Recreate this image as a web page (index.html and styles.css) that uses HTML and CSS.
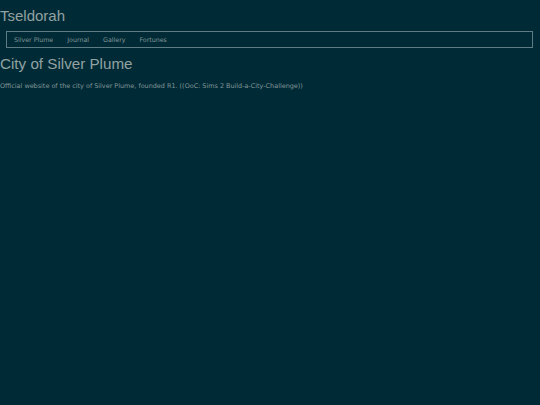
FILE: index.html
```html
<!DOCTYPE html>
<html>
<head>
  <title>Tseldorah</title>
  <link rel="stylesheet" href="styles.css">
</head>
<body>

  <div class="site-title">Tseldorah</div>

  <div class="nav">
    <a href="#">Silver Plume</a>
    <a href="#">Journal</a>
    <a href="#">Gallery</a>
    <a href="#">Fortunes</a>
  </div>

  <h1>City of Silver Plume</h1>
  <p class="intro">Official website of the city of Silver Plume, founded R1. ((OoC: Sims 2 Build-a-City-Challenge))</p>

</body>
</html>
```

FILE: styles.css
```css
body {
  background-color: #002b36;
  color: #839496;
  font-family: 'DejaVu Sans', Verdana, sans-serif;
  margin: 0;
  padding: 0;
}

.site-title {
  font-family: 'Liberation Sans', Arial, sans-serif;
  font-size: 15px;
  line-height: 17px;
  padding-top: 7px;
  color: #93a1a1;
}

/* Menu bar */
.nav {
  display: flex;
  gap: 14px;
  margin: 7px 7px 0 6px;
  padding: 0 7px;
  height: 15px;
  align-items: center;
  border: 1px solid #5d7c84;
  font-size: 6.3px;
}

.nav a {
  color: #839496;
  text-decoration: none;
}

h1 {
  font-family: 'Liberation Sans', Arial, sans-serif;
  font-size: 15.2px;
  font-weight: normal;
  line-height: 17px;
  margin: 7px 0 0 0;
  color: #93a1a1;
}

.intro {
  font-size: 6.45px;
  margin: 10px 0 0 0;
}
```
